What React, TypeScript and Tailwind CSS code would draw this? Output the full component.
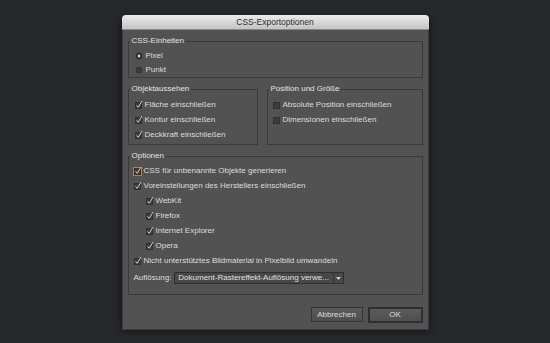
import React from "react";

const font = { fontFamily: '"Liberation Sans", Arial, sans-serif' };

function Box({ checked = true, focus = false }: { checked?: boolean; focus?: boolean }) {
  return (
    <svg width="10" height="10" viewBox="0 0 10 10" className="shrink-0">
      {focus && <rect x="0.5" y="1.5" width="8" height="8" fill="none" stroke="#c9782e" strokeWidth="1" />}
      <rect x="1.5" y="2.5" width="6" height="6" fill="#3c3c3c" stroke="#303030" strokeWidth="1" />
      {checked && (
        <path d="M2.8 5.7 L4.2 7.3 L7.8 1.4" stroke="#dadada" strokeWidth="0.9" fill="none" strokeLinecap="round" strokeLinejoin="round" />
      )}
    </svg>
  );
}

function Radio({ on }: { on: boolean }) {
  return (
    <svg width="8" height="8" viewBox="0 0 8 8" className="shrink-0">
      <circle cx="4" cy="4" r="3" fill="#3c3c3c" stroke="#2f2f2f" strokeWidth="1" />
      {on && <circle cx="4" cy="4" r="1.2" fill="#e0e0e0" />}
    </svg>
  );
}

function CheckRow({ label, checked = true, focus = false, indent = false }: { label: string; checked?: boolean; focus?: boolean; indent?: boolean }) {
  return (
    <div className={"flex items-center h-[15px] gap-[1px] " + (indent ? "pl-[12px]" : "")}>
      <Box checked={checked} focus={focus} />
      <span className="whitespace-nowrap">{label}</span>
    </div>
  );
}

function Legend({ children }: { children: React.ReactNode }) {
  return <legend className="ml-[1px] px-[2px] text-[8px] leading-[10px] text-[#e2e2e2]">{children}</legend>;
}

export default function App() {
  return (
    <div className="w-[550px] h-[343px] bg-[#27282c] flex items-center justify-center" style={font}>
      <div className="w-[307px] h-[313px] flex flex-col rounded-t-[4px] shadow-[0_2px_8px_rgba(0,0,0,0.6)]">
        <div className="h-[15px] shrink-0 rounded-t-[4px] bg-gradient-to-b from-[#ececec] to-[#c4c4c4] border-b border-[#8a8a8a] flex items-center justify-center text-[8.5px] text-[#2e2e2e]">
          CSS-Exportoptionen
        </div>
        <div className="flex-1 bg-[#525252] border-x border-b border-[#3a3a3a] px-[5px] pt-[6px] pb-[6px] flex flex-col text-[8px] text-[#dcdcdc] leading-[10px]">
          <fieldset className="border border-[#3a3a3a] min-w-0">
            <Legend>CSS-Einheiten</Legend>
            <div className="pl-[6px] pt-[2px]">
              <div className="flex items-center h-[15px] gap-[3px]">
                <Radio on={true} />
                <span>Pixel</span>
              </div>
              <div className="flex items-center h-[14px] gap-[3px]">
                <Radio on={false} />
                <span>Punkt</span>
              </div>
            </div>
          </fieldset>

          <div className="flex gap-[9px] mt-[6px]">
            <fieldset className="border border-[#3a3a3a] min-w-0 w-[130px] shrink-0">
              <Legend>Objektaussehen</Legend>
              <div className="pl-[5px] pt-[3px] pb-[2px]">
                <CheckRow label="Fläche einschließen" />
                <CheckRow label="Kontur einschließen" />
                <CheckRow label="Deckkraft einschließen" />
              </div>
            </fieldset>
            <fieldset className="border border-[#3a3a3a] min-w-0 flex-1">
              <Legend>Position und Größe</Legend>
              <div className="pl-[4px] pt-[3px] pb-[2px]">
                <CheckRow label="Absolute Position einschließen" checked={false} />
                <CheckRow label="Dimensionen einschließen" checked={false} />
              </div>
            </fieldset>
          </div>

          <fieldset className="border border-[#3a3a3a] min-w-0 mt-[6px]">
            <Legend>Optionen</Legend>
            <div className="pl-[4px] pt-[2px] pb-[10px]">
              <CheckRow label="CSS für unbenannte Objekte generieren" focus={true} />
              <CheckRow label="Voreinstellungen des Herstellers einschließen" />
              <CheckRow label="WebKit" indent />
              <CheckRow label="Firefox" indent />
              <CheckRow label="Internet Explorer" indent />
              <CheckRow label="Opera" indent />
              <CheckRow label="Nicht unterstütztes Bildmaterial in Pixelbild umwandeln" />
              <div className="flex items-center gap-[3px] mt-[4px] pl-[1px]">
                <span className="whitespace-nowrap">Auflösung:</span>
                <div className="w-[170px] h-[12px] border border-[#2f2f2f] bg-[#484848] flex items-center">
                  <span className="flex-1 pl-[3px] whitespace-nowrap overflow-hidden text-[#e0e0e0]">
                    Dokument-Rastereffekt-Auflösung verwe...
                  </span>
                  <div className="w-[10px] h-full border-l border-[#343434] flex items-center justify-center">
                    <svg width="5" height="3" viewBox="0 0 5 3">
                      <path d="M0 0 L5 0 L2.5 3 Z" fill="#d0d0d0" />
                    </svg>
                  </div>
                </div>
              </div>
            </div>
          </fieldset>

          <div className="flex justify-end gap-[5px] mt-[12px]">
            <button className="w-[52px] h-[15px] border border-[#353535] bg-gradient-to-b from-[#5b5b5b] to-[#4f4f4f] text-[8px] text-[#dcdcdc] flex items-center justify-center">
              Abbrechen
            </button>
            <button className="w-[55px] h-[16px] border-2 border-[#2f2f2f] bg-gradient-to-b from-[#5b5b5b] to-[#4f4f4f] text-[8px] text-[#dcdcdc] flex items-center justify-center">
              OK
            </button>
          </div>
        </div>
      </div>
    </div>
  );
}
